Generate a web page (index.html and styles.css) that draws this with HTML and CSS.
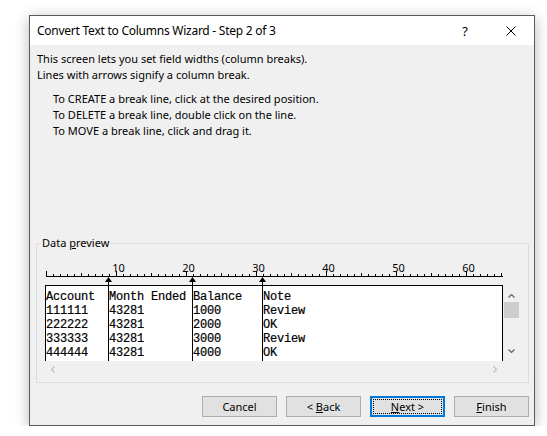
FILE: index.html
```html
<!DOCTYPE html>
<html>
<head>
<meta charset="utf-8">
<link rel="stylesheet" href="styles.css">
</head>
<body>
<div class="window">
  <div class="titlebar">
    <span class="title">Convert Text to Columns Wizard - Step 2 of 3</span>
    <span class="tb-btn help">?</span>
    <span class="tb-btn close">
      <svg width="10" height="10" viewBox="0 0 10 10"><path d="M0.5 0.5 L9.5 9.5 M9.5 0.5 L0.5 9.5" stroke="#000" stroke-width="1" fill="none"/></svg>
    </span>
  </div>
  <div class="content">
    <div class="intro">
      <p>This screen lets you set field widths (column breaks).</p>
      <p>Lines with arrows signify a column break.</p>
    </div>
    <div class="howto">
      <p>To CREATE a break line, click at the desired position.</p>
      <p>To DELETE a break line, double click on the line.</p>
      <p>To MOVE a break line, click and drag it.</p>
    </div>
    <div class="group">
      <span class="group-label">Data <u>p</u>review</span>
      <div class="preview">
        <svg class="ruler" width="475" height="27" viewBox="0 0 475 27">
          <rect x="1" y="18" width="457" height="1" fill="#000"/>
          <g fill="#000" id="ticks"></g>
          <g class="ruler-nums">
            <text x="73.5" y="14">10</text>
            <text x="143.5" y="14">20</text>
            <text x="213.5" y="14">30</text>
            <text x="283.5" y="14">40</text>
            <text x="353.5" y="14">50</text>
            <text x="423.5" y="14">60</text>
          </g>
        </svg>
        <div class="listwrap">
          <div class="listbox"><pre class="data">Account  Month Ended Balance   Note
111111   43281       1000      Review
222222   43281       2000      OK
333333   43281       3000      Review
444444   43281       4000      OK</pre></div>
          <div class="vscroll">
            <svg width="17" height="76" viewBox="0 0 17 76">
              <path d="M5.5 12.5 L8.5 9.5 L11.5 12.5" stroke="#606060" stroke-width="1.2" fill="none"/>
              <rect x="1" y="17" width="15" height="16" fill="#cdcdcd"/>
              <path d="M5.5 64.5 L8.5 67.5 L11.5 64.5" stroke="#606060" stroke-width="1.2" fill="none"/>
            </svg>
          </div>
          <div class="hscroll">
            <svg width="458" height="17" viewBox="0 0 458 17">
              <path d="M9.5 5.5 L6.5 8.5 L9.5 11.5" stroke="#c0c0c0" stroke-width="1.2" fill="none"/>
              <path d="M448.5 5.5 L451.5 8.5 L448.5 11.5" stroke="#c0c0c0" stroke-width="1.2" fill="none"/>
            </svg>
          </div>
          <div class="corner"></div>
        </div>
        <svg class="breaks" width="458" height="103" viewBox="0 0 458 103">
          <g fill="#000">
            <rect x="63" y="23" width="1" height="80"/>
            <polygon points="60,24 63.5,19 67,24"/>
            <rect x="147" y="23" width="1" height="80"/>
            <polygon points="144,24 147.5,19 151,24"/>
            <rect x="217" y="23" width="1" height="80"/>
            <polygon points="214,24 217.5,19 221,24"/>
          </g>
        </svg>
      </div>
    </div>
    <div class="buttons">
      <button class="btn">Cancel</button>
      <button class="btn">&lt; <u>B</u>ack</button>
      <button class="btn default"><span class="focus"><u>N</u>ext &gt;</span></button>
      <button class="btn"><u>F</u>inish</button>
    </div>
  </div>
</div>
<script src="ruler.js"></script>
</body>
</html>
```

FILE: ruler.js
```js
(function () {
  var g = document.getElementById('ticks');
  var ns = 'http://www.w3.org/2000/svg';
  for (var k = 0; k <= 65; k++) {
    var h = (k % 10 === 0) ? 5 : (k % 5 === 0 ? 3 : 2);
    var r = document.createElementNS(ns, 'rect');
    r.setAttribute('x', 1 + 7 * k);
    r.setAttribute('y', 18 - h);
    r.setAttribute('width', 1);
    r.setAttribute('height', h);
    g.appendChild(r);
  }
})();
```

FILE: styles.css
```css
* { box-sizing: border-box; }

body {
  margin: 0;
  background: #ffffff;
  font-family: "Noto Sans", "Liberation Sans", sans-serif;
  font-size: 11px;
  color: #000;
}

.window {
  margin: 15px 0 0 29px;
  width: 506px;
  height: 411px;
  border: 1px solid #5a5a5a;
  background: #f0f0f0;
  box-shadow: 0 3px 14px rgba(0, 0, 0, 0.28);
  display: flex;
  flex-direction: column;
}

.titlebar {
  height: 29px;
  flex: none;
  background: #ffffff;
  display: flex;
  align-items: center;
}

.title {
  flex: 1;
  padding-left: 7px;
  font-size: 12px;
  letter-spacing: -0.25px;
  line-height: 29px;
}

.tb-btn {
  width: 46px;
  height: 29px;
  display: flex;
  align-items: center;
  justify-content: center;
}

.help { font-size: 13px; }

.content {
  flex: 1;
  padding: 6px 5px 0 6px;
  display: flex;
  flex-direction: column;
}

.intro p, .howto p {
  margin: 0;
  line-height: 16px;
}

.intro { padding-left: 1px; }

.howto {
  margin-top: 8px;
  padding-left: 17px;
}

.group {
  margin-top: 104px;
  border: 1px solid #dcdcdc;
  padding: 0 7px 4px 8px;
}

.group-label {
  display: block;
  width: max-content;
  margin: -9px 0 0 -4px;
  padding: 0 1px;
  background: #f0f0f0;
  line-height: 16px;
}

.preview {
  position: relative;
  margin-top: 7px;
}

.ruler {
  display: block;
}

.ruler-nums text {
  font-family: "Noto Sans", "Liberation Sans", sans-serif;
  font-size: 11px;
  text-anchor: middle;
  fill: #000;
}

.listwrap {
  display: grid;
  grid-template-columns: 458px 17px;
  grid-template-rows: 76px 17px;
}

.listbox {
  background: #ffffff;
  border: 1px solid #000;
  border-bottom: none;
  overflow: hidden;
}

.data {
  margin: 0;
  padding: 4px 0 0 0;
  font-family: "Liberation Mono", "Courier New", monospace;
  font-size: 12px;
  letter-spacing: -0.2px;
  line-height: 14px;
  color: #000;
  -webkit-text-stroke: 0.2px #000;
}

.vscroll, .hscroll, .corner {
  background: #f0f0f0;
}

.vscroll svg, .hscroll svg { display: block; }

.breaks {
  position: absolute;
  left: 0;
  top: 0;
  pointer-events: none;
}

.buttons {
  margin-top: 13px;
  display: flex;
  justify-content: flex-end;
  gap: 9px;
}

.btn {
  width: 75px;
  height: 21px;
  padding: 0;
  border: 1px solid #adadad;
  background: #e1e1e1;
  font-family: inherit;
  font-size: 11px;
  color: #000;
  line-height: 19px;
  text-align: center;
}

.btn.default {
  border: 2px solid #0078d7;
  padding: 1px;
}

.btn .focus {
  display: block;
  height: 100%;
  border: 1px dotted #000;
  line-height: 13px;
}
```
